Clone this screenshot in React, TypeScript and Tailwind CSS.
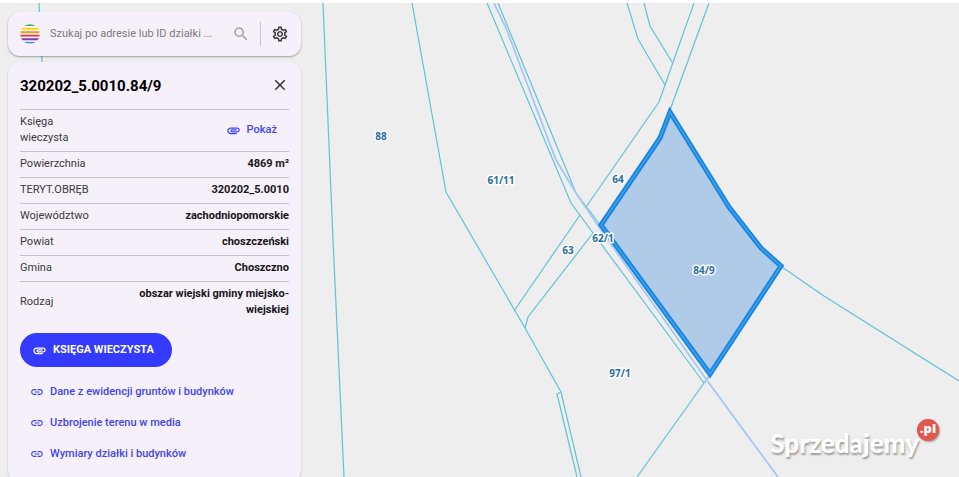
import { MdAttachment, MdClose, MdLink, MdOutlineSettings, MdSearch } from "react-icons/md";

const details = [
  { label: "Powierzchnia", value: "4869 m²" },
  { label: "TERYT.OBRĘB", value: "320202_5.0010" },
  { label: "Województwo", value: "zachodniopomorskie" },
  { label: "Powiat", value: "choszczeński" },
  { label: "Gmina", value: "Choszczno" },
  { label: "Rodzaj", value: "obszar wiejski gminy miejsko-wiejskiej" },
];

const links = [
  "Dane z ewidencji gruntów i budynków",
  "Uzbrojenie terenu w media",
  "Wymiary działki i budynków",
];

const boundaries = [
  "39,3 42,62 44,120",
  "323,3 333,240 344,477",
  "412,3 446,192 525,328 561,392 581,477",
  "561,392 557,394 577,477",
  "487,3 571,203 593,233 704,383",
  "498,3 576,193 601,226",
  "627,3 638,39 665,85",
  "644,3 650,26 672,62",
  "694,3 659,102 586,207",
  "709,3 670,110",
  "580,215 514,311",
  "593,233 528,317 525,328",
  "782,267 824,296 959,381",
  "710,375 704,383 637,477",
];

const labels = [
  { x: 381, y: 140, text: "88" },
  { x: 501, y: 184, text: "61/11" },
  { x: 618, y: 183, text: "64" },
  { x: 568, y: 254, text: "63" },
  { x: 603, y: 242, text: "62/1" },
  { x: 704, y: 274, text: "84/9" },
  { x: 620, y: 377, text: "97/1" },
];

const parcel = "670,112 729,207 761,248 781,266 710,374 601,225 660,138";

function ParcelMap() {
  return (
    <svg
      className="absolute inset-0 h-full w-full"
      viewBox="0 0 959 477"
      preserveAspectRatio="xMinYMin slice"
      role="img"
      aria-label="Mapa działek"
    >
      <g fill="none" stroke="#60c3d4" strokeWidth="1.2">
        {boundaries.map((points) => (
          <polyline key={points} points={points} />
        ))}
      </g>
      <polyline
        points="494,3 506,28 556,160 576,193 601,230 706,379 778,477"
        fill="none"
        stroke="#a3c8f5"
        strokeWidth="1.8"
      />
      <polygon points={parcel} fill="#afcbe7" stroke="#1a82e6" strokeWidth="5" />
      <polygon points={parcel} fill="none" stroke="#36a5df" strokeWidth="1.6" />
      <g
        className="font-['Noto_Sans',sans-serif] text-[10px] font-bold"
        fill="#286f9e"
        stroke="#ffffff"
        strokeWidth="3"
        strokeLinejoin="round"
        paintOrder="stroke"
        textAnchor="middle"
      >
        {labels.map((label) => (
          <text key={label.text} x={label.x} y={label.y}>
            {label.text}
          </text>
        ))}
      </g>
    </svg>
  );
}

function StripedLogo() {
  return (
    <svg className="size-5 shrink-0" viewBox="0 0 20 20" aria-hidden="true">
      <clipPath id="disc">
        <circle cx="10" cy="10" r="9.8" />
      </clipPath>
      <g clipPath="url(#disc)">
        <rect width="20" height="20" fill="#ffffff" />
        <rect y="0" width="20" height="2" fill="#43a756" />
        <rect y="3.7" width="20" height="2" fill="#fbd11c" />
        <rect y="7.2" width="20" height="2" fill="#fb9a16" />
        <rect y="10.7" width="20" height="1.9" fill="#e63a3c" />
        <rect y="14.2" width="20" height="2.1" fill="#9038b4" />
        <rect y="17.8" width="20" height="1.8" fill="#3195e8" />
      </g>
    </svg>
  );
}

function SearchBar() {
  return (
    <form className="flex h-11 items-center rounded-xl bg-[#f5f0f9] px-3 shadow-[0_1px_2px_rgba(0,0,0,0.35)]">
      <StripedLogo />
      <input
        type="text"
        aria-label="Szukaj działki"
        placeholder="Szukaj po adresie lub ID działki ..."
        className="ml-2.5 min-w-0 flex-1 bg-transparent text-[11px] leading-4 text-[#757575] outline-none placeholder:text-[#7b7880]"
      />
      <button type="submit" aria-label="Szukaj" className="text-[#a5a2a8]">
        <MdSearch size={18} />
      </button>
      <span className="mx-2.5 h-6 w-px bg-[#c9c5cd]" />
      <button type="button" aria-label="Ustawienia" className="text-[#3c3a40]">
        <MdOutlineSettings size={18} />
      </button>
    </form>
  );
}

function ParcelPanel() {
  return (
    <section className="rounded-xl bg-[#f5f0f9] px-3 pt-3 pb-5 shadow-[0_1px_2px_rgba(0,0,0,0.2)]">
      <header className="flex h-[35px] items-start justify-between">
        <h1 className="text-[15px] leading-6 font-bold text-black">320202_5.0010.84/9</h1>
        <button type="button" aria-label="Zamknij" className="flex h-[22px] items-center text-[#333136]">
          <MdClose size={18} />
        </button>
      </header>
      <dl className="text-[11px] leading-4">
        <div className="flex items-center justify-between border-t border-[#c6c2ca] pt-1 pb-[5px]">
          <dt className="w-16 text-[#3b393e]">Księga wieczysta</dt>
          <dd className="pr-3">
            <button type="button" className="flex items-center gap-1.5 font-medium text-[#4346f5]">
              <MdAttachment size={15} />
              Pokaż
            </button>
          </dd>
        </div>
        {details.map((item) => (
          <div
            key={item.label}
            className="flex items-center justify-between border-t border-[#c6c2ca] pt-1 pb-[5px]"
          >
            <dt className="text-[#3b393e]">{item.label}</dt>
            <dd className="max-w-40 text-right font-bold text-[#17161a]">{item.value}</dd>
          </div>
        ))}
      </dl>
      <button
        type="button"
        className="mt-2.5 flex h-[34px] items-center gap-1.5 rounded-full bg-[#343bff] pr-[18px] pl-3 text-[11px] font-bold text-white"
      >
        <MdAttachment size={15} />
        KSIĘGA WIECZYSTA
      </button>
      <nav className="mt-[17px] flex flex-col gap-[15px] pl-2.5">
        {links.map((text) => (
          <a
            key={text}
            href="#"
            className="flex items-center gap-1.5 text-[11px] leading-4 font-medium text-[#4346e8]"
          >
            <MdLink size={14} />
            {text}
          </a>
        ))}
      </nav>
    </section>
  );
}

function Watermark() {
  return (
    <div className="absolute right-5 bottom-[18px] flex items-start">
      <span className="pt-2 font-['Lato',sans-serif] text-[26px] leading-8 font-black text-white [text-shadow:1px_2px_2px_rgba(0,0,0,0.35)]">
        Sprzedajemy
      </span>
      <span className="-ml-0.5 flex size-[22px] items-center justify-center rounded-full bg-[#e3564f] pb-1 font-['Open_Sans',sans-serif] text-[13px] leading-4 font-extrabold text-white shadow-[1px_1px_2px_rgba(0,0,0,0.35)]">
        .pl
      </span>
    </div>
  );
}

export default function App() {
  return (
    <main className="relative h-screen overflow-hidden border-t-[3px] border-white bg-[#eeeeee] font-['Roboto',sans-serif]">
      <div className="absolute inset-x-0 -top-[3px] h-screen [clip-path:inset(3px_0_0_0)]">
        <ParcelMap />
      </div>
      <aside className="relative flex w-[309px] flex-col gap-1.5 px-2 pt-[9px]">
        <SearchBar />
        <ParcelPanel />
      </aside>
      <Watermark />
    </main>
  );
}
